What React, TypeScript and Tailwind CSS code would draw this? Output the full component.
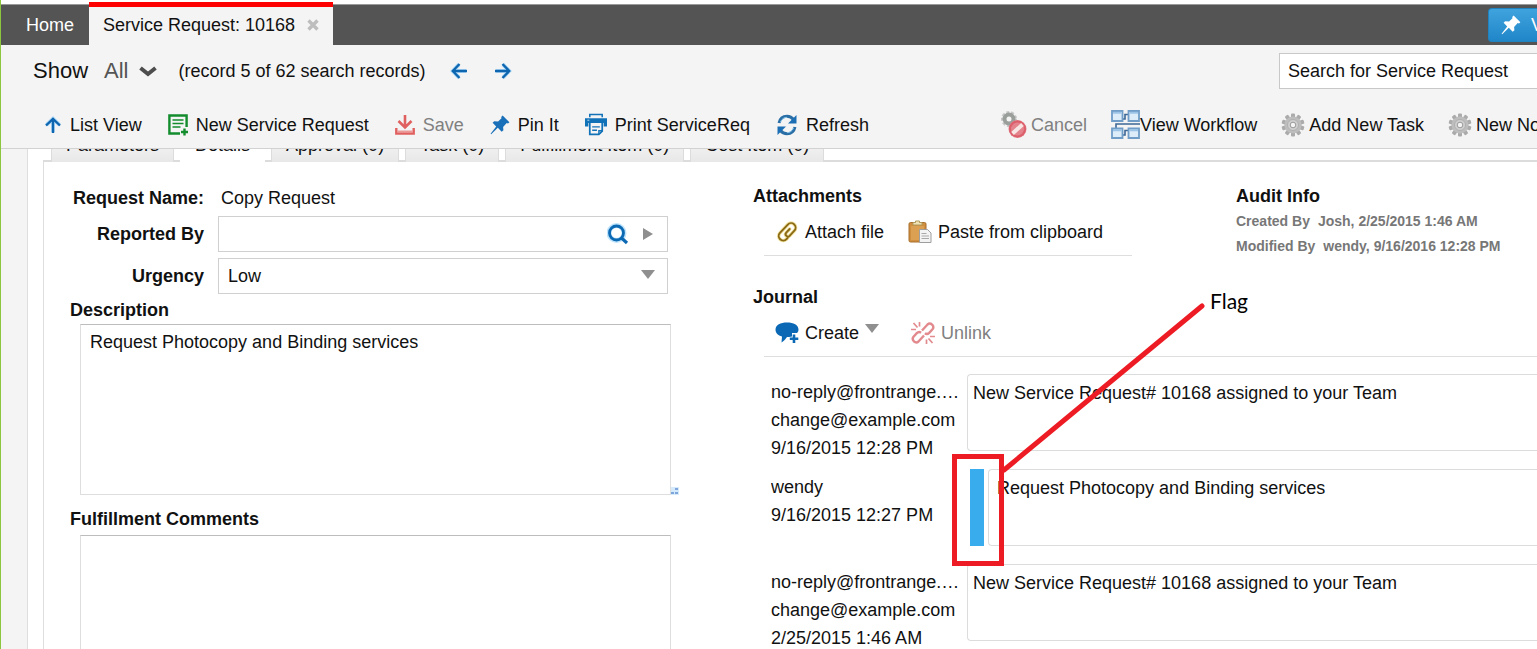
import { useState } from 'react';
import type { ReactNode } from 'react';

interface JournalEntry {
  from: string[];
  date: string;
  message: string;
  flagged?: boolean;
}

const tabs = [
  'Parameters',
  'Details',
  'Approval (0)',
  'Task (0)',
  'Fulfillment Item (0)',
  'Cost Item (0)',
];

const journal: JournalEntry[] = [
  {
    from: ['no-reply@frontrange.com', 'change@example.com'],
    date: '9/16/2015 12:28 PM',
    message: 'New Service Request# 10168 assigned to your Team',
  },
  {
    from: ['wendy'],
    date: '9/16/2015 12:27 PM',
    message: 'Request Photocopy and Binding services',
    flagged: true,
  },
  {
    from: ['no-reply@frontrange.com', 'change@example.com'],
    date: '2/25/2015 1:46 AM',
    message: 'New Service Request# 10168 assigned to your Team',
  },
];

function ArrowIcon({ className }: { className?: string }) {
  return (
    <svg viewBox="0 0 18 18" className={className} fill="none">
      <path d="M16 9H3M9 2.5 2.8 9 9 15.5" stroke="#b5ddf8" strokeWidth="4" />
      <path d="M17 9H3M9.5 2 2.8 9l6.7 7" stroke="#0f66b0" strokeWidth="2.4" />
    </svg>
  );
}

function PinIcon({ className }: { className?: string }) {
  return (
    <svg viewBox="0 0 20 20" className={className} fill="currentColor">
      <path d="M12.6.6 19.4 7.2 18 8.4l-1.3-.3-3.6 3.8.3 3.3-1.7 1.6-3.9-4L1.2 19.2.6 18.8 6.2 11.6 2.6 7.8l1.6-1.5 3.9.3 3.4-3.3-.3-1.4z" />
    </svg>
  );
}

function NewRequestIcon() {
  return (
    <svg viewBox="0 0 20 22" className="h-[22px] w-5" fill="none" stroke="#128c2c">
      <path d="M18.6 13V1.5H1.4v18H12" strokeWidth="2.4" />
      <path d="M4.5 6h11M4.5 9.500h11M4.5 13h8" strokeWidth="1.6" />
      <path d="M16.5 14.5v7M13 18h7" strokeWidth="2.4" />
    </svg>
  );
}

function SaveIcon() {
  return (
    <svg viewBox="0 0 20 20" className="size-5" fill="none" stroke="#e0605f">
      <path d="M10 0v12M3.5 6l6.5 6.5L16.5 6" strokeWidth="2.6" />
      <path d="M1.3 13v5.5h17.4V13" strokeWidth="2.4" />
      <path d="M2 16.5h16" strokeWidth="2" stroke="#ec9a99" />
    </svg>
  );
}

function PrintIcon() {
  return (
    <svg viewBox="0 0 23 23" className="h-[23px] w-[22px]" fill="none" stroke="#1272b8">
      <path d="M5 4V1h13v3" strokeWidth="1.6" />
      <path d="M0 5h23v8.5h-3.5V10h-16v3.5H0z" fill="#1272b8" stroke="none" />
      <path d="M5 10v11.8h9.5L18 18.500V10" strokeWidth="1.8" />
      <path d="M7.5 14h8M7.5 17.5h5M14.5 21.5V18H18" strokeWidth="1.4" />
      <path d="M2.5 7h2" stroke="#cde8fa" />
    </svg>
  );
}

function RefreshIcon() {
  return (
    <svg viewBox="0 0 22 22" className="size-[22px]" fill="none">
      <path d="M3 9C4 4.5 7.5 2.3 11 2.3c3 0 5 1.2 6.500 3.200" stroke="#2a6ea6" strokeWidth="3" />
      <path d="M20.5 1v8.5H12z" fill="#1c6fb4" />
      <path d="M19 13c-1 4.5-4.5 6.7-8 6.700-3 0-5-1.200-6.500-3.200" stroke="#2a6ea6" strokeWidth="3" />
      <path d="M1.5 21v-8.5H10z" fill="#1c6fb4" />
      <path d="M4.5 8C6 4.5 8.5 3.3 11 3.3M17.5 14c-1.5 3.5-4 4.700-6.500 4.700" stroke="#8ccaf0" />
    </svg>
  );
}

const gearTeeth = [0, 36, 72, 108, 144, 180, 216, 252, 288, 324];

function GearIcon() {
  return (
    <svg viewBox="0 0 24 24" className="size-6">
      {gearTeeth.map((angle) => (
        <rect
          key={angle}
          x="10"
          y="0.5"
          width="4"
          height="6"
          rx="1"
          fill="#ababab"
          transform={`rotate(${angle} 12 12)`}
        />
      ))}
      <circle cx="12" cy="12" r="8.5" fill="#bdbdbd" />
      <circle cx="12" cy="12" r="5.5" fill="#cfcfcf" stroke="#b0b0b0" />
      <circle cx="12" cy="12" r="2.8" fill="#f4f4f4" stroke="#999" />
    </svg>
  );
}

function CancelIcon() {
  return (
    <svg viewBox="0 0 26 28" className="h-7 w-[26px]" fill="none">
      <circle cx="8" cy="8" r="6" stroke="#c6c6c6" strokeWidth="4" strokeDasharray="2.6 1.6" />
      <circle cx="8" cy="8" r="4.5" stroke="#9b9f9c" strokeWidth="4" />
      <circle cx="16.5" cy="18" r="9" fill="#e4838c" />
      <circle cx="16.5" cy="18" r="7.5" stroke="#dc5f6c" strokeWidth="2" />
      <path d="m11.5 22.5 10-9" stroke="#f8e6e4" strokeWidth="4" />
    </svg>
  );
}

function WorkflowIcon() {
  return (
    <svg viewBox="0 0 29 29" className="size-[29px]" fill="none">
      <path d="M11 9h3V4.5h4M29 14H5v5M11 25h3v-4.5h4" stroke="#3d6795" strokeWidth="1.6" />
      <path
        d="M1 1h10.5v10H1zM17.5 1H28v10H17.5zM1 18.5h10.5V28H1zM17.5 18.5H28V28H17.5z"
        fill="#dcecf8"
        stroke="#6f9dc8"
        strokeWidth="1.8"
      />
      <path d="M2 2.8h8.5M18.5 2.8H27M2 20.3h8.5M18.5 20.3H27" stroke="#9cc4e6" strokeWidth="2" />
    </svg>
  );
}

function SearchIcon() {
  return (
    <svg viewBox="0 0 22 22" className="size-[22px]" fill="none">
      <circle cx="9.5" cy="10" r="7.5" stroke="#bfe4fb" strokeWidth="5" />
      <circle cx="9.5" cy="10" r="7" stroke="#0c69b3" strokeWidth="2.8" />
      <path d="m14.5 15 5.5 5" stroke="#0c69b3" strokeWidth="3.2" />
    </svg>
  );
}

function PaperclipIcon() {
  const clip = 'M16.5 16v1.5a4.5 4.5 0 0 1-9 0V6a4.500 4.500 0 0 1 9 0v7a2.300 2.300 0 0 1-4.600 0V8';

  return (
    <svg viewBox="0 0 24 24" className="size-6" fill="none" strokeLinecap="round">
      <g transform="rotate(43 12 12)">
        <path d={clip} stroke="#f3e3a4" strokeWidth="3.6" />
        <path d={clip} stroke="#8a6a14" strokeWidth="1.9" />
      </g>
    </svg>
  );
}

function ClipboardIcon() {
  return (
    <svg viewBox="0 0 24 24" className="size-6">
      <rect x="1" y="2.5" width="17" height="19.5" rx="1.5" fill="#cf8f3e" stroke="#a86f2c" />
      <path d="M3 6h13v14H3z" fill="#dba052" />
      <path d="M5 5V2.5h2.5V1h4v1.5H14V5z" fill="#efe2b4" stroke="#b09a5c" />
      <path d="M11.5 9.5h8L23 13v9.5H11.5z" fill="#f3f3f3" stroke="#9e9e9e" />
      <path d="M13.5 13.5h5M13.5 16H21M13.5 18.5H21" stroke="#a9a9a9" />
    </svg>
  );
}

function CommentIcon() {
  return (
    <svg viewBox="0 0 24 22" className="h-[22px] w-6">
      <path
        d="M12 .5c6.500 0 11.500 2.500 11.500 7 0 1.500-.5 2.500-1.500 3.500h-5v3.500c-2 .5-4 .500-5 .500-1.500 2-3 4-5.500 5.500l.5-6C3 13.500.5 11 .5 7.500.5 3 5.500.5 12 .5z"
        fill="#0a68b4"
      />
      <path d="M19 12.5V21M14.8 16.800h8.500" stroke="#0a68b4" strokeWidth="2.6" />
    </svg>
  );
}

function UnlinkIcon() {
  return (
    <svg viewBox="0 0 24 24" className="size-6" fill="none" stroke="#e28a8e" strokeWidth="2.4">
      <path d="m11 9.500 5.500-6c3-2.500 7.500 1.500 5 4.800l-3.300 3.500c-1.200 1.200-3 1.400-4.300.4" />
      <path d="m13 14.500-5.500 6c-3 2.500-7.500-1.500-5-4.800l3.300-3.500c1.200-1.200 3-1.400 4.300-.4" />
      <path
        d="M8.500 1v4.500M2.500 2l4 4.500M0 8.500h5M15.500 18.500V23M17.500 17.500l4 4.500M19 15.500h5"
        strokeWidth="1.7"
      />
    </svg>
  );
}

function DownTriangle({ className }: { className?: string }) {
  return (
    <svg viewBox="0 0 14 9" className={`h-[9px] w-3.5 ${className ?? ''}`}>
      <path d="M0 0h14L7 9z" fill="#8f8f8f" />
    </svg>
  );
}

interface ToolButtonProps {
  icon: ReactNode;
  label: string;
  gap?: string;
  disabled?: boolean;
}

function ToolButton({ icon, label, gap = 'gap-2', disabled }: ToolButtonProps) {
  return (
    <button
      disabled={disabled}
      className={`flex shrink-0 items-center whitespace-nowrap ${gap} ${
        disabled ? 'text-[#808080]' : 'text-[#111]'
      }`}
    >
      {icon}
      {label}
    </button>
  );
}

// Red frame, pointer line and caption drawn over the flagged entry
function FlagCallout() {
  return (
    <>
      <div className="absolute -left-[18px] -top-[15px] h-[112px] w-[52px] border-[5px] border-[#ed1c24]" />
      <svg
        className="absolute -top-[168px] left-[32px] h-[172px] w-[204px]"
        viewBox="0 0 204 172"
        fill="none"
      >
        <path d="M2 169 200 5" stroke="#ed1c24" strokeWidth="5" strokeLinecap="round" />
      </svg>
      <span className="absolute -top-[180px] left-[240px] font-['Lato',sans-serif] text-[21px] leading-6 text-black">
        Flag
      </span>
    </>
  );
}

function JournalRow({ entry }: { entry: JournalEntry }) {
  return (
    <li className="flex h-[77px]">
      <div className="w-[196px] shrink-0 pt-1 leading-7">
        {entry.from.map((line) => (
          <p key={line} className="w-[190px] truncate">
            {line}
          </p>
        ))}
        <p>{entry.date}</p>
      </div>
      {entry.flagged && (
        <div className="relative z-10 ml-[3px] mr-1 w-3.5 shrink-0 bg-[#39aced]">
          <FlagCallout />
        </div>
      )}
      <div
        className={`flex-1 rounded-l border border-r-0 border-[#dcdcdc] pt-1.5 leading-6 ${
          entry.flagged ? 'pl-2' : 'pl-[5px]'
        }`}
      >
        {entry.message}
      </div>
    </li>
  );
}

export default function App() {
  const [activeTab, setActiveTab] = useState('Details');

  return (
    <div className="flex h-screen flex-col overflow-hidden border-l border-[#8cc63f] bg-[#f4f4f4] font-['Liberation_Sans',Arial,sans-serif] text-lg leading-6 text-[#111]">
      {/* Workspace tabs */}
      <header className="shrink-0 bg-white pt-1">
        <nav className="flex h-[41px] items-center border-t border-[#9a9a9a] bg-[#545454]">
          <a href="#home" className="w-[88px] shrink-0 pl-[25px] text-white">
            Home
          </a>
          <div className="-mt-[3px] flex h-[43px] shrink-0 items-center gap-3 self-start border-t-[5px] border-[#fe0000] bg-[#f4f4f4] pb-0.5 pl-3.5 pr-3.5">
            <span>Service Request: 10168</span>
            <button aria-label="Close tab">
              <svg viewBox="0 0 12 12" className="size-3">
                <path d="m1.5 1.5 9 9m0-9-9 9" stroke="#bdbdbd" strokeWidth="3.4" />
              </svg>
            </button>
          </div>
          <button className="ml-auto flex h-[34px] w-[49px] shrink-0 items-center gap-2.5 overflow-hidden rounded-l border border-r-0 border-[#1f83c0] bg-linear-to-b from-[#3fa3de] to-[#1f86c8] pl-3 text-white">
            <PinIcon className="size-5 shrink-0" />
            View
          </button>
        </nav>
      </header>

      {/* Record navigation */}
      <div className="flex h-[52px] shrink-0 items-center pl-8">
        <span className="text-[22px]">Show</span>
        <button className="ml-4 flex items-center gap-2.5 text-[22px] text-[#555]">
          All
          <svg viewBox="0 0 18 11" className="h-[11px] w-[18px]" fill="none">
            <path d="m1.500 2 7.500 6 7.500-6" stroke="#4d4d4d" strokeWidth="4" />
          </svg>
        </button>
        <span className="ml-[22px]">(record 5 of 62 search records)</span>
        <div className="ml-6 flex items-center gap-[26px]">
          <button aria-label="Previous record">
            <ArrowIcon className="size-[18px]" />
          </button>
          <button aria-label="Next record">
            <ArrowIcon className="size-[18px] rotate-180" />
          </button>
        </div>
        <input
          aria-label="Search"
          defaultValue="Search for Service Request"
          className="ml-auto h-9 w-[258px] border border-r-0 border-[#c8c8c8] bg-white pl-2"
        />
      </div>

      {/* Toolbar */}
      <div className="flex h-[52px] shrink-0 items-center border-b border-[#d2d2d2] pl-[43px] pt-1">
        <div className="flex shrink-0 items-center gap-[26px]">
          <ToolButton icon={<ArrowIcon className="size-[18px] rotate-90" />} label="List View" />
          <ToolButton icon={<NewRequestIcon />} label="New Service Request" />
          <ToolButton icon={<SaveIcon />} label="Save" disabled />
          <ToolButton icon={<PinIcon className="size-5 text-[#1a70b8]" />} label="Pin It" />
          <ToolButton icon={<PrintIcon />} label="Print ServiceReq" />
          <ToolButton icon={<RefreshIcon />} label="Refresh" />
        </div>
        <div className="ml-[132px] flex shrink-0 items-center gap-6">
          <ToolButton icon={<CancelIcon />} label="Cancel" gap="gap-1" disabled />
          <ToolButton icon={<WorkflowIcon />} label="View Workflow" gap="gap-0" />
          <ToolButton icon={<GearIcon />} label="Add New Task" gap="gap-1" />
          <ToolButton icon={<GearIcon />} label="New Note" gap="gap-1" />
        </div>
      </div>

      {/* Record */}
      <main className="ml-[26px] flex min-h-0 flex-1 flex-col overflow-hidden border-l border-[#dedede] bg-white pl-[15px]">
        <div className="-mt-[17px] flex h-[30px] shrink-0 gap-1.5 border-b-2 border-[#dcdcdc] pl-2">
          {tabs.map((tab) => (
            <button
              key={tab}
              onClick={() => setActiveTab(tab)}
              className={`-mb-0.5 h-[30px] border-x px-3.5 pb-1 ${
                tab === activeTab
                  ? 'border-white bg-white'
                  : 'border-[#dcdcdc] bg-linear-to-b from-[#f8f8f8] to-[#e8e8e8]'
              }`}
            >
              {tab}
            </button>
          ))}
        </div>

        <div className="flex min-h-0 flex-1 items-stretch overflow-hidden border-l border-[#dedede] pl-[26px] pt-6">
          <form className="w-[601px] shrink-0">
            <div className="grid grid-cols-[134px_450px] gap-x-3.5 gap-y-1.5">
              <span className="text-right font-bold">Request Name:</span>
              <span className="pl-[3px]">Copy Request</span>
              <label htmlFor="reported" className="self-center text-right font-bold">
                Reported By
              </label>
              <div className="flex h-9 items-center border border-[#d0d0d0] pr-3.5">
                <input id="reported" className="h-full min-w-0 flex-1 px-2 outline-none" />
                <button type="button" aria-label="Find person">
                  <SearchIcon />
                </button>
                <button type="button" aria-label="Open person" className="ml-3.5">
                  <svg viewBox="0 0 10 12" className="h-3 w-2.5">
                    <path d="M0 0v12l10-6z" fill="#8f8f8f" />
                  </svg>
                </button>
              </div>
              <label htmlFor="urgency" className="self-center text-right font-bold">
                Urgency
              </label>
              <div className="relative h-9">
                <select
                  id="urgency"
                  className="size-full appearance-none border border-[#d0d0d0] bg-white px-[9px] outline-none"
                >
                  <option>Low</option>
                </select>
                <DownTriangle className="pointer-events-none absolute right-[13px] top-3" />
              </div>
            </div>

            <label htmlFor="description" className="mt-1 block font-bold">
              Description
            </label>
            <div className="relative ml-2.5 mt-0.5">
              <textarea
                id="description"
                defaultValue="Request Photocopy and Binding services"
                className="block h-[171px] w-full resize-none border border-[#dedede] border-t-[#bdbdbd] px-[9px] py-[5px] outline-none"
              />
              <svg viewBox="0 0 8 8" className="absolute -right-2 bottom-0 size-2">
                <path d="M0 0h8v8H0z" fill="#d5ebfb" />
                <path d="M4 1h3v2H4zM0 5h3v2H0zM4 5h3v2H4z" fill="#7fa6dc" />
              </svg>
            </div>

            <label htmlFor="comments" className="mt-3 block font-bold">
              Fulfillment Comments
            </label>
            <textarea
              id="comments"
              className="ml-2.5 mt-1 block h-[171px] w-[591px] resize-none border border-[#dedede] border-t-[#bdbdbd] px-[9px] py-[5px] outline-none"
            />
          </form>

          <div className="-mt-0.5 ml-[82px] min-w-0 flex-1">
            <div className="flex">
              <section className="w-[379px] shrink-0">
                <h2 className="font-bold">Attachments</h2>
                <div className="ml-[11px] flex h-12 items-center gap-6 border-b border-[#dedede] pl-[11px]">
                  <ToolButton icon={<PaperclipIcon />} label="Attach file" gap="gap-1.5" />
                  <ToolButton icon={<ClipboardIcon />} label="Paste from clipboard" gap="gap-1.5" />
                </div>
              </section>
              <section className="ml-[104px] whitespace-nowrap">
                <h2 className="font-bold">Audit Info</h2>
                <dl className="pt-px text-sm leading-[25px] font-bold text-[#777]">
                  <div className="flex gap-2">
                    <dt>Created By</dt>
                    <dd>Josh, 2/25/2015 1:46 AM</dd>
                  </div>
                  <div className="flex gap-2">
                    <dt>Modified By</dt>
                    <dd>wendy, 9/16/2016 12:28 PM</dd>
                  </div>
                </dl>
              </section>
            </div>

            <section className="mt-[26px]">
              <h2 className="font-bold">Journal</h2>
              <div className="ml-[11px] flex h-12 items-center gap-8 border-b border-[#dedede] pl-[11px]">
                <button className="flex items-center gap-1.5">
                  <CommentIcon />
                  Create
                  <DownTriangle className="mb-2" />
                </button>
                <ToolButton icon={<UnlinkIcon />} label="Unlink" gap="gap-1.5" disabled />
              </div>
              <ul className="ml-[18px] mt-[17px] flex flex-col gap-[18px]">
                {journal.map((entry) => (
                  <JournalRow key={entry.date} entry={entry} />
                ))}
              </ul>
            </section>
          </div>
        </div>
      </main>
    </div>
  );
}
